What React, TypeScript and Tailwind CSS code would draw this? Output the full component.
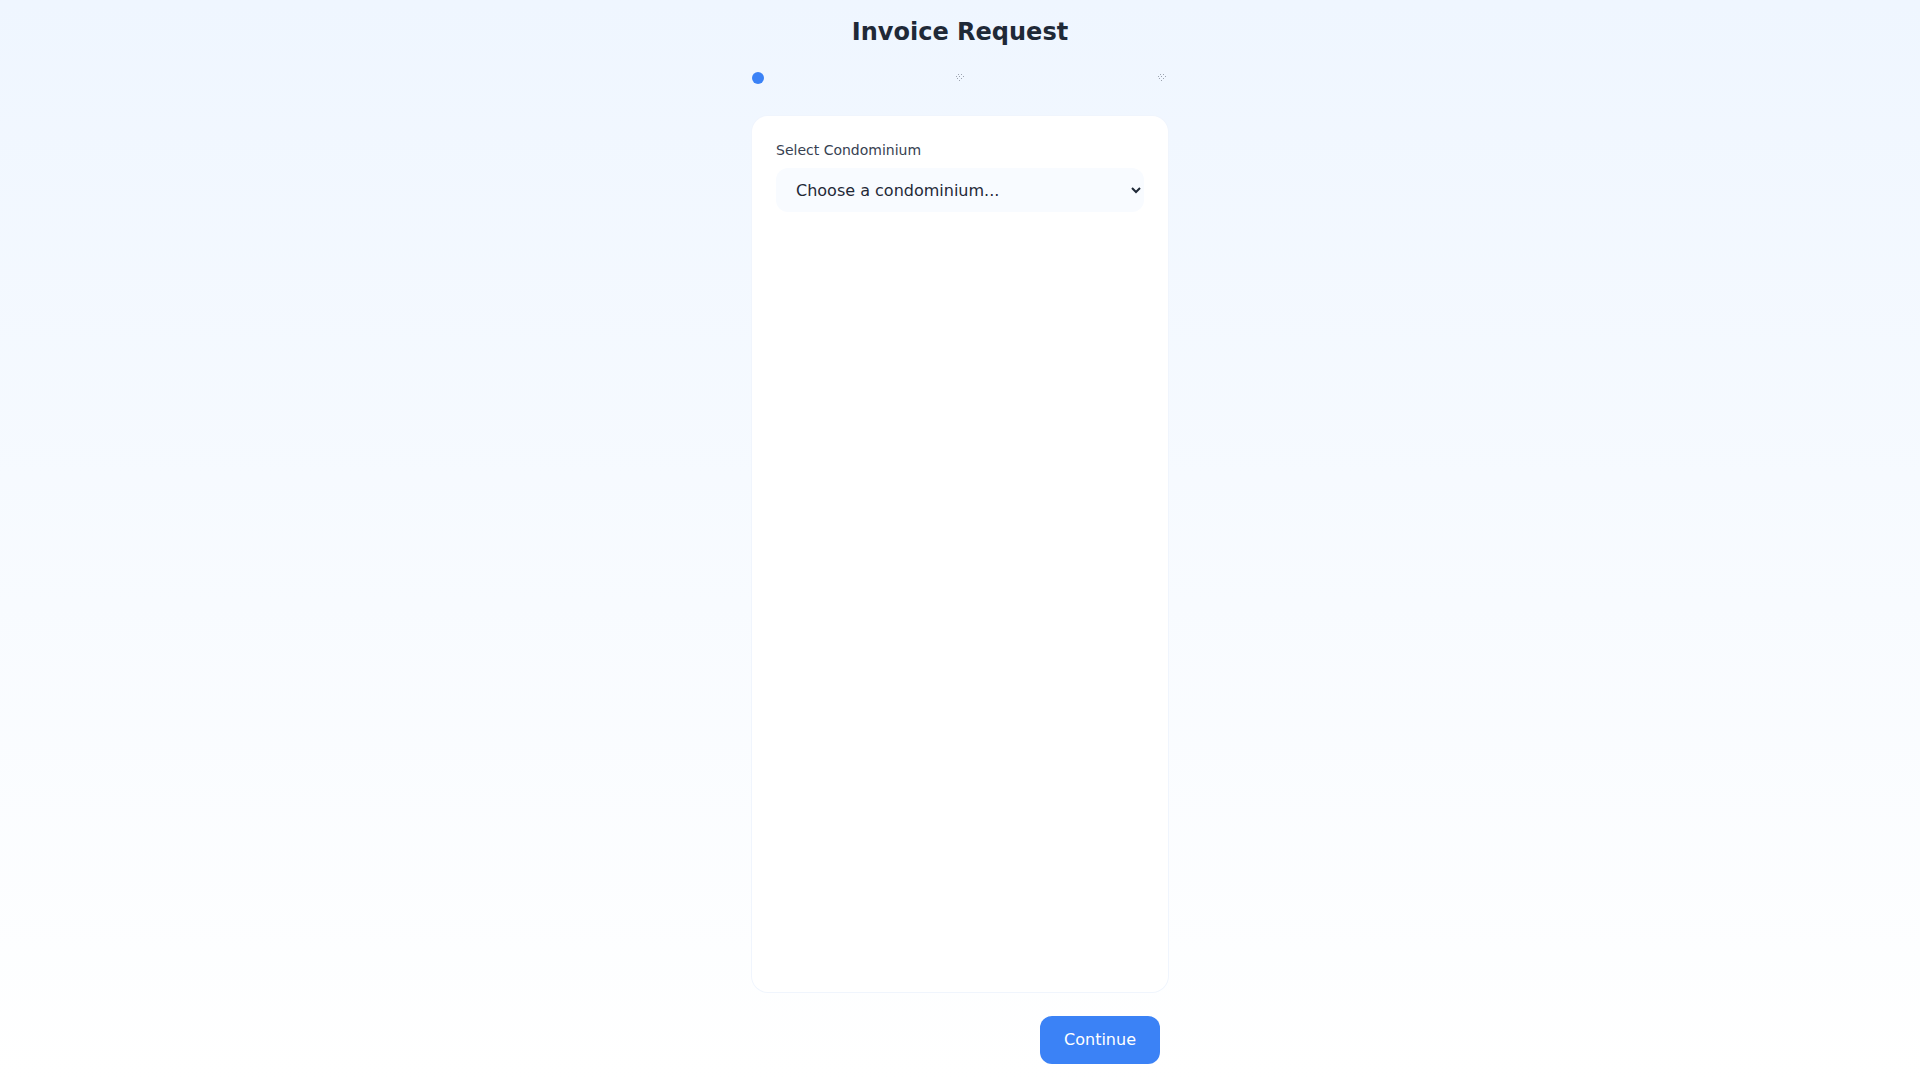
import React from "react";

function DottedStep() {
  return (
    <svg width="12" height="12" viewBox="0 0 12 12" className="block">
      <rect x="4" y="2" width="1" height="1" fill="#9ca3af" />
      <rect x="7" y="2" width="1" height="1" fill="#9ca3af" />
      <rect x="2" y="4" width="1" height="1" fill="#9ca3af" />
      <rect x="5" y="4" width="1" height="1" fill="#9ca3af" />
      <rect x="9" y="4" width="1" height="1" fill="#9ca3af" />
      <rect x="3" y="6" width="1" height="1" fill="#9ca3af" />
      <rect x="7" y="6" width="1" height="1" fill="#9ca3af" />
      <rect x="5" y="8" width="1" height="1" fill="#9ca3af" />
    </svg>
  );
}

export default function App() {
  return (
    <div
      className="min-h-screen h-screen w-full flex flex-col items-center bg-gradient-to-b from-[#eff6ff] to-white"
      style={{ fontFamily: '"DejaVu Sans", "Noto Sans", sans-serif' }}
    >
      <h1 className="mt-4 text-2xl leading-8 font-bold text-[#1f2937]">Invoice Request</h1>
      <div className="mt-6 w-[416px] h-3 flex justify-between items-center">
        <div className="w-3 h-3 rounded-full bg-[#3b82f6]" />
        <DottedStep />
        <DottedStep />
      </div>
      <div className="mt-8 w-[416px] flex-1 bg-white rounded-2xl ring-1 ring-[#f0f5fd] p-6">
        <label className="block text-sm leading-5 text-[#374151] mb-2">Select Condominium</label>
        <select
          defaultValue=""
          className="w-full h-11 rounded-xl bg-[#f8fbff] pl-4 pr-2 text-base text-[#1f2937] outline-none"
          style={{ fontFamily: '"DejaVu Sans", sans-serif' }}
        >
          <option value="">Choose a condominium...</option>
        </select>
      </div>
      <div className="mt-6 mb-4 w-[416px] flex justify-end pr-2">
        <button className="h-12 px-6 rounded-xl bg-[#3b82f6] text-white text-base">Continue</button>
      </div>
    </div>
  );
}
